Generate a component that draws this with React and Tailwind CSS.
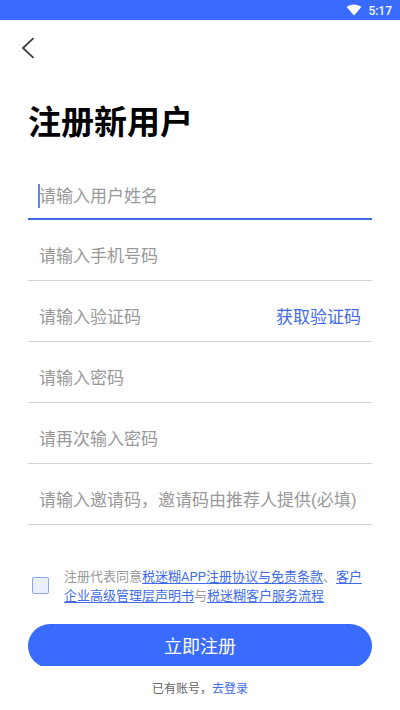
const fields = [
  { id: 'name', label: '请输入用户姓名', type: 'text', active: true },
  { id: 'phone', label: '请输入手机号码', type: 'tel' },
  { id: 'code', label: '请输入验证码', type: 'text', action: '获取验证码' },
  { id: 'password', label: '请输入密码', type: 'password' },
  { id: 'confirm', label: '请再次输入密码', type: 'password' },
  { id: 'invite', label: '请输入邀请码，邀请码由推荐人提供(必填)', type: 'text' },
];

function StatusBar() {
  return (
    <div className="flex h-5 items-center justify-end gap-1.5 bg-[#3a6bff] pr-2 text-white">
      <svg className="h-3 w-4" viewBox="0 0 16 12" aria-hidden="true">
        <path d="M8 11.5 0.6 3C2.6 1.3 5.2 0.4 8 0.4s5.4 0.9 7.4 2.6z" fill="currentColor" />
      </svg>
      <span className="pt-0.5 text-xs leading-none font-medium">5:17</span>
    </div>
  );
}

function Field({ id, label, type, active, action }) {
  return (
    <div
      className={`relative flex h-[61px] items-end px-[11px] ${
        active ? 'border-b-2 border-[#3f6cf0]' : 'border-b border-[#d2d2d2]'
      }`}
    >
      {active && <span className="absolute bottom-2.5 left-2.5 h-6 w-0.5 bg-[#5f84f7]" />}
      <input
        id={id}
        type={type}
        aria-label={label}
        placeholder={label}
        className={`h-6 w-full min-w-0 flex-1 bg-transparent text-[17px] leading-6 text-gray-800 outline-none placeholder:text-[#999999] ${
          active ? 'mb-2.5' : 'mb-3'
        }`}
      />
      {action && (
        <button type="button" className="mb-3 shrink-0 text-[17px] leading-6 text-[#3f6be8]">
          {action}
        </button>
      )}
    </div>
  );
}

function DocLink({ children }) {
  return (
    <a href="#" className="text-[#3f6be8] underline underline-offset-2">
      {children}
    </a>
  );
}

export default function App() {
  return (
    <div className="flex min-h-screen flex-col bg-white font-[Roboto,'Noto_Sans_CJK_SC',sans-serif]">
      <StatusBar />
      <header className="flex h-14 items-center px-[21px]">
        <button type="button" aria-label="返回" className="text-[#3c3c3c]">
          <svg className="block h-6 w-4" viewBox="0 0 16 24" fill="none" stroke="currentColor" strokeWidth="1.8">
            <path d="M12.5 2.2 2 12l10.5 9.8" />
          </svg>
        </button>
      </header>
      <form className="px-7">
        <h1 className="pt-[22px] text-[33px] leading-[50px] font-bold text-black">注册新用户</h1>
        <div className="pt-[11px]">
          {fields.map((field) => (
            <Field key={field.id} {...field} />
          ))}
        </div>
        <div className="flex items-center gap-[15px] pt-10 pl-1">
          <input
            id="agree"
            type="checkbox"
            aria-label="同意协议"
            className="size-[17px] shrink-0 appearance-none rounded-xs border border-[#8aa5f3] bg-[#e9effe] checked:bg-[#3a6bff]"
          />
          <p className="pt-0.5 text-[13px] leading-[19px] text-[#999999]">
            <label htmlFor="agree">注册代表同意</label>
            <DocLink>税迷糊APP注册协议与免责条款</DocLink>、<DocLink>客户企业高级管理层声明书</DocLink>与
            <DocLink>税迷糊客户服务流程</DocLink>
          </p>
        </div>
        <div className="mt-[19px] h-[42px] overflow-hidden">
          <button type="submit" className="h-11 w-full rounded-full bg-[#3a6bff] pt-0.5 text-lg text-white">
            立即注册
          </button>
        </div>
      </form>
      <footer className="pt-[13px] text-center text-xs leading-5 text-[#666666]">
        已有账号，
        <a href="#" className="text-[#3f6be8]">
          去登录
        </a>
      </footer>
    </div>
  );
}
